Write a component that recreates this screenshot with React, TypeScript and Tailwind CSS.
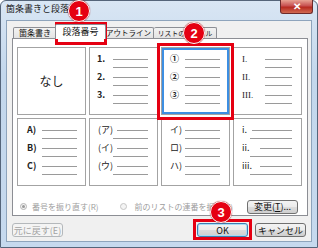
import React from "react";

type It = { label: string; lw: string; l2?: string };

function Entry({ label, lw, l2, lab }: It & { lab: string }) {
  return (
    <div className="flex h-[18px] flex-col">
      <div className="flex h-[10px] items-center">
        <span className={`${lw} shrink-0 whitespace-nowrap text-[9px] leading-[10px] text-[#222] ${lab}`}>{label}</span>
        <div className="h-px flex-1 bg-[#9a9a9a]" />
      </div>
      <div className="flex h-[8px] items-start pt-[3px]">
        <div className={`${l2 ?? ""} h-px flex-1 bg-[#9a9a9a]`} />
      </div>
    </div>
  );
}

type CellDef = { pad: string; lab: string; items: It[]; sel?: boolean };

function Cell({ pad, lab, items, sel }: CellDef) {
  return (
    <div
      className={`h-[68px] w-[69px] border border-[#a3a3a3] bg-white pt-[6px] ${pad} ${
        sel ? "shadow-[inset_0_0_0_2px_#3d8fe2]" : ""
      }`}
    >
      {items.map((it, i) => (
        <Entry key={i} {...it} lab={lab} />
      ))}
    </div>
  );
}

const cells: CellDef[] = [
  {
    pad: "pl-[7px] pr-[9px]",
    lab: "font-bold",
    items: [
      { label: "1.", lw: "w-[16px]", l2: "ml-[16px]" },
      { label: "2.", lw: "w-[16px]", l2: "ml-[16px]" },
      { label: "3.", lw: "w-[16px]", l2: "ml-[16px]" },
    ],
  },
  {
    pad: "pl-[8px] pr-[9px]",
    lab: "font-bold text-[#111]",
    sel: true,
    items: [
      { label: "①", lw: "w-[15px]", l2: "ml-[15px]" },
      { label: "②", lw: "w-[15px]", l2: "ml-[15px]" },
      { label: "③", lw: "w-[15px]", l2: "ml-[15px]" },
    ],
  },
  {
    pad: "pl-[8px] pr-[9px]",
    lab: "font-['Liberation_Serif',serif]",
    items: [
      { label: "I.", lw: "w-[23px]", l2: "ml-[23px]" },
      { label: "II.", lw: "w-[23px]", l2: "ml-[23px]" },
      { label: "III.", lw: "w-[23px]", l2: "ml-[23px]" },
    ],
  },
  {
    pad: "pl-[9px] pr-[8px]",
    lab: "font-bold",
    items: [
      { label: "A)", lw: "w-[15px]", l2: "ml-[15px]" },
      { label: "B)", lw: "w-[15px]", l2: "ml-[15px]" },
      { label: "C)", lw: "w-[15px]", l2: "ml-[15px]" },
    ],
  },
  {
    pad: "pl-[8px] pr-[9px]",
    lab: "",
    items: [
      { label: "(ア)", lw: "w-[19px]", l2: "ml-[15px]" },
      { label: "(イ)", lw: "w-[19px]", l2: "ml-[15px]" },
      { label: "(ウ)", lw: "w-[19px]", l2: "ml-[15px]" },
    ],
  },
  {
    pad: "pl-[8px] pr-[9px]",
    lab: "",
    items: [
      { label: "イ)", lw: "w-[15px]", l2: "ml-[15px]" },
      { label: "ロ)", lw: "w-[15px]", l2: "ml-[15px]" },
      { label: "ハ)", lw: "w-[15px]", l2: "ml-[15px]" },
    ],
  },
  {
    pad: "pl-[8px] pr-[9px]",
    lab: "",
    items: [
      { label: "i.", lw: "w-[10px]", l2: "ml-[8px]" },
      { label: "ii.", lw: "w-[18px]", l2: "ml-[8px]" },
      { label: "iii.", lw: "w-[18px]", l2: "ml-[8px]" },
    ],
  },
];

const btn =
  "flex h-[14px] w-[51px] items-center justify-center rounded-[3px] border text-[9px] leading-none whitespace-nowrap";
const btnBg = "bg-[linear-gradient(#f3f3f3,#ebebeb_50%,#dddddd_50%,#cfcfcf)]";
const tabUn =
  "flex h-[11px] items-center justify-center rounded-t-[2px] border border-b-0 border-[#8c8e94] bg-[linear-gradient(#f2f2f2,#e3e3e3)] leading-none whitespace-nowrap overflow-hidden";

function Badge({ n, pos }: { n: string; pos: string }) {
  return (
    <div
      className={`absolute ${pos} flex h-[22px] w-[22px] items-center justify-center rounded-full border-[1.5px] border-white bg-[#e50012] text-[13px] font-bold leading-none text-white shadow-[0_0_1px_#900] font-['Liberation_Sans',sans-serif]`}
    >
      {n}
    </div>
  );
}

export default function App() {
  return (
    <div className="relative h-[248px] w-[318px] overflow-hidden bg-white font-['Liberation_Sans','Noto_Sans_CJK_JP',sans-serif] text-[#111]">
      <div className="flex h-[248px] w-[318px] flex-col rounded-t-[6px] border border-[#55657a] bg-[linear-gradient(#d9e6f4,#c3d7ec_30%,#c6d9ee)] px-[5px] pb-[5px]">
        {/* title bar */}
        <div className="relative flex h-[19px] shrink-0 items-start pt-[2px]">
          <span className="text-[9px] leading-[12px] text-[#1a1a1a] font-['Noto_Sans_CJK_JP',sans-serif]">
            箇条書きと段落番号
          </span>
        </div>
        {/* client */}
        <div className="flex flex-1 flex-col border border-[#8ea4bc] bg-[#f0f0f0] pl-[5px] pr-[3px] font-['Noto_Sans_CJK_JP',sans-serif]">
          {/* tabs */}
          <div className="flex h-[17px] shrink-0 items-end pl-[1px]">
            <div className={`${tabUn} w-[44px] text-[8px]`}>箇条書き</div>
            <div className="relative z-10 -mx-[2px] -mb-px flex h-[15px] w-[51px] items-start justify-center rounded-t-[2px] border border-b-0 border-[#8c8e94] bg-white pt-[2px] text-[9px] leading-none">
              段落番号
            </div>
            <div className={`${tabUn} w-[50px] border-l-0 text-[7.5px]`}>アウトライン</div>
            <div className={`${tabUn} w-[63px] border-l-0 text-[6.8px]`}>リストのスタイル</div>
          </div>
          {/* panel */}
          <div className="flex h-[178px] shrink-0 flex-col border border-[#8c8e94] bg-white">
            <div className="grid grid-cols-[69px_69px_69px_69px] gap-[3px] pl-[4px] pt-[8px]">
              <div className="flex h-[68px] w-[69px] items-center justify-center border border-[#a3a3a3] bg-white text-[12px] text-[#222]">
                なし
              </div>
              {cells.map((c, i) => (
                <Cell key={i} {...c} />
              ))}
            </div>
            <div className="flex-1" />
            <div className="mb-[2px] flex h-[13px] items-center pl-[7px] pr-[9px]">
              <div className="flex items-center">
                <div className="flex h-[7px] w-[7px] items-center justify-center rounded-full border border-[#b5b5b5] bg-[#f4f4f4]">
                  <div className="h-[3px] w-[3px] rounded-full bg-[#9a9a9a]" />
                </div>
                <span className="ml-[5px] text-[8px] leading-none text-[#9d9d9d]">番号を振り直す(R)</span>
              </div>
              <div className="ml-[21px] flex items-center">
                <div className="h-[7px] w-[7px] rounded-full border border-[#c5c5c5] bg-[#f4f4f4]" />
                <span className="ml-[8px] whitespace-nowrap text-[8px] leading-none text-[#9d9d9d]">前のリストの連番を振る(C)</span>
              </div>
              <div className="flex-1" />
              <div className={`${btn} ${btnBg} h-[13px] w-[50px] border-[#707070]`}>
                変更(<span className="underline">T</span>)...
              </div>
            </div>
          </div>
          {/* bottom buttons */}
          <div className="flex flex-1 items-start pr-[2px] pt-[7px]">
            <div className={`${btn} border-[#b4b8bb] bg-[#f4f4f4] text-[#a3a3a3]`}>元に戻す(E)</div>
            <div className="flex-1" />
            <div className={`${btn} ${btnBg} border-[#3c7fb1] shadow-[inset_0_0_0_1px_#a9dcf6]`}>OK</div>
            <div className={`${btn} ${btnBg} ml-[7px] border-[#707070]`}>キャンセル</div>
          </div>
        </div>
      </div>

      {/* close button */}
      <div className="absolute left-[280px] top-0 flex h-[14px] w-[33px] items-center justify-center rounded-b-[3px] border border-t-0 border-[#6d2a2a] bg-[linear-gradient(#e8a393,#c75050_45%,#b72a20_55%,#d16a52)] text-[10px] font-bold leading-none text-white">
        ✕
      </div>

      {/* red highlight boxes */}
      <div className="absolute left-[55px] top-[22px] h-[23px] w-[52px] border-[3px] border-[#e50012]" />
      <div className="absolute left-[157px] top-[43px] h-[77px] w-[77px] border-[3px] border-[#e50012]" />
      <div className="absolute left-[193px] top-[219px] h-[21px] w-[59px] border-[3px] border-[#e50012]" />

      <Badge n="1" pos="left-[68px] top-0" />
      <Badge n="2" pos="left-[183px] top-[22px]" />
      <Badge n="3" pos="left-[210px] top-[201px]" />
    </div>
  );
}
